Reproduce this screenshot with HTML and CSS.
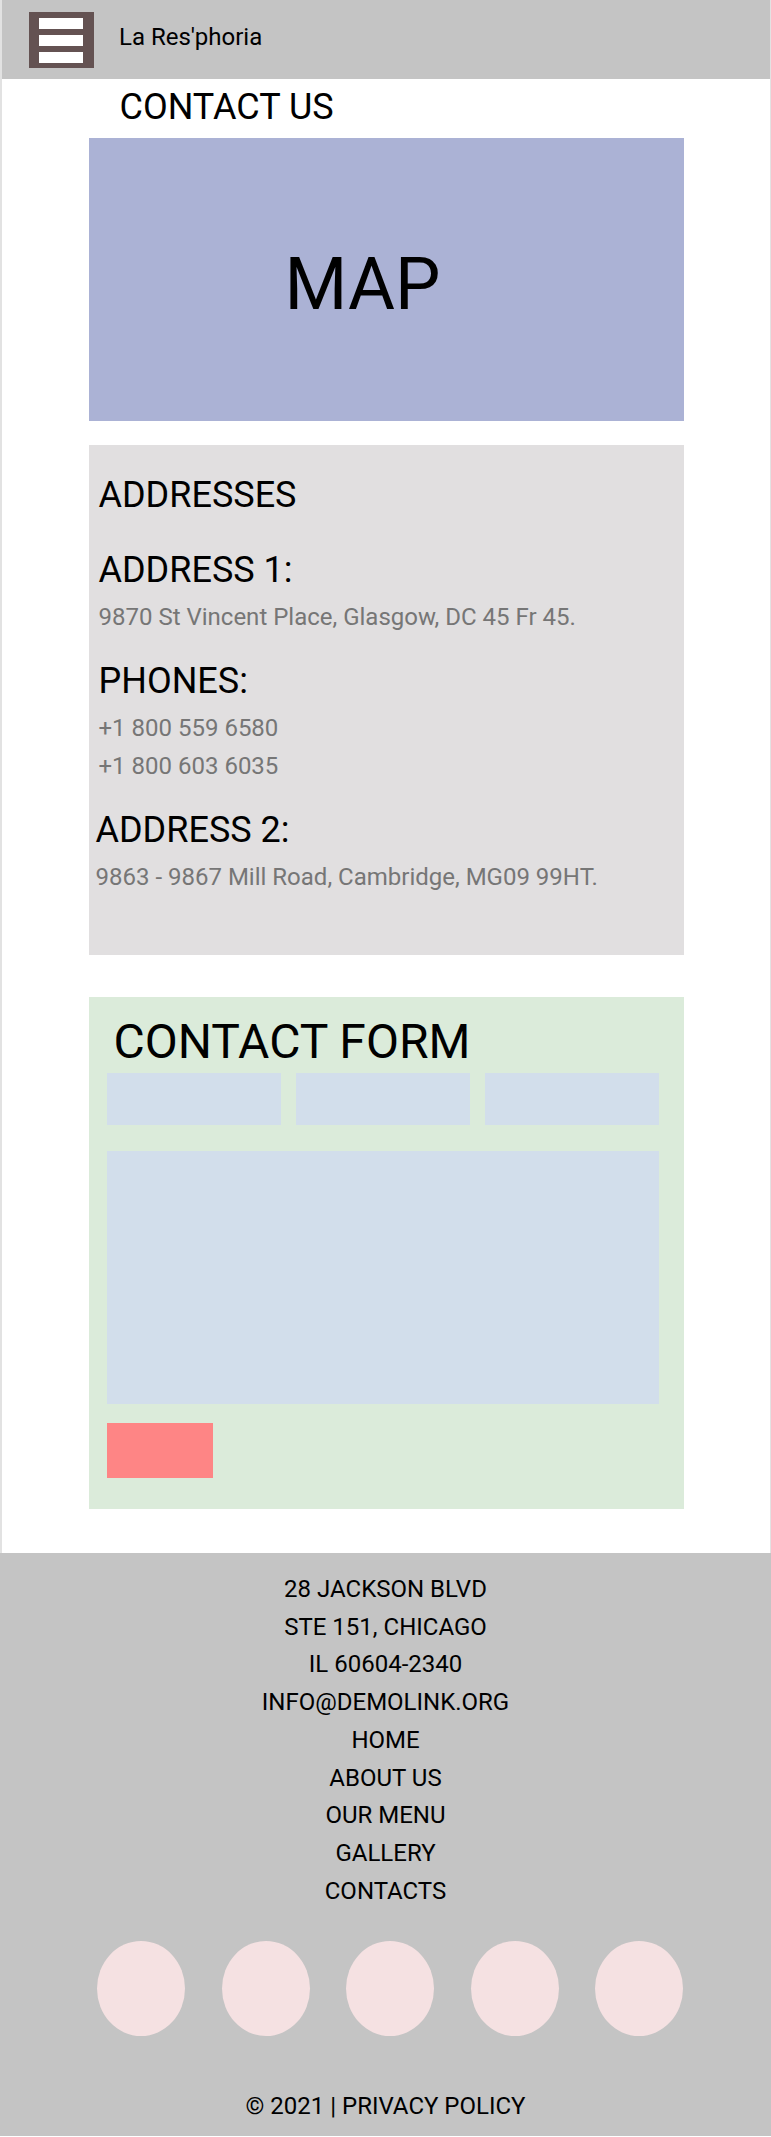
FILE: index.html
```html
<!DOCTYPE html>
<html lang="en">
<head>
<meta charset="utf-8">
<title>Contact Us — La Res'phoria</title>
<link rel="stylesheet" href="styles.css">
</head>
<body>
<div class="page">
  <header class="topbar">
    <button class="burger" type="button" aria-label="Menu"><span></span><span></span><span></span></button>
    <span class="brand">La Res'phoria</span>
  </header>
  <main class="content">
    <h1 class="page-title">CONTACT US</h1>
    <div class="map"><span class="map-label">MAP</span></div>
    <section class="info">
      <h2 class="info-heading">ADDRESSES</h2>
      <div class="info-block">
        <h3 class="info-title">ADDRESS 1:</h3>
        <p class="info-text">9870 St Vincent Place, Glasgow, DC 45 Fr 45.</p>
      </div>
      <div class="info-block">
        <h3 class="info-title">PHONES:</h3>
        <p class="info-text">+1 800 559 6580</p>
        <p class="info-text">+1 800 603 6035</p>
      </div>
      <div class="info-block info-block-shift">
        <h3 class="info-title">ADDRESS 2:</h3>
        <p class="info-text">9863 - 9867 Mill Road, Cambridge, MG09 99HT.</p>
      </div>
    </section>
    <section class="form-card">
      <h2 class="form-title">CONTACT FORM</h2>
      <div class="fields">
        <div class="field"></div>
        <div class="field"></div>
        <div class="field"></div>
      </div>
      <div class="message"></div>
      <div class="submit"></div>
    </section>
  </main>
</div>
<footer class="footer">
  <div class="footer-lines">
    <p class="footer-line">28 JACKSON BLVD</p>
    <p class="footer-line">STE 151, CHICAGO</p>
    <p class="footer-line">IL 60604-2340</p>
    <p class="footer-line">INFO@DEMOLINK.ORG</p>
    <a class="footer-line" href="#">HOME</a>
    <a class="footer-line" href="#">ABOUT US</a>
    <a class="footer-line" href="#">OUR MENU</a>
    <a class="footer-line" href="#">GALLERY</a>
    <a class="footer-line" href="#">CONTACTS</a>
  </div>
  <div class="socials">
    <span class="social"></span>
    <span class="social"></span>
    <span class="social"></span>
    <span class="social"></span>
    <span class="social"></span>
  </div>
  <p class="copyright">© 2021 | PRIVACY POLICY</p>
</footer>
</body>
</html>
```

FILE: styles.css
```css
* { box-sizing: border-box; }

html, body {
  margin: 0;
  padding: 0;
  background: #ffffff;
}

body {
  font-family: Roboto, "Liberation Sans", Arial, sans-serif;
  color: #000000;
}

.page {
  border-left: 2px solid #e2e2e2;
  border-right: 1px solid #e2e2e2;
}

/* Header */
.topbar {
  height: 79px;
  background: #c4c4c4;
  display: flex;
  align-items: center;
  padding-left: 27px;
}

.burger {
  width: 65px;
  height: 56px;
  background: #645252;
  border: 0;
  margin: 0;
  padding: 6px 11px 5px 10px;
  display: flex;
  flex-direction: column;
  gap: 6px;
  cursor: pointer;
}

.burger span {
  display: block;
  height: 11px;
  width: 44px;
  background: #ffffff;
}

.brand {
  margin-left: 25px;
  font-size: 24px;
  line-height: 28px;
  margin-bottom: 5px;
}

/* Content */
.content {
  width: 595px;
  margin: 0 auto;
  padding: 7px 0 44px;
}

.page-title {
  margin: 0 0 10px 31px;
  font-size: 36px;
  line-height: 42px;
  font-weight: 400;
}

.map {
  height: 283px;
  background: #abb2d5;
  display: flex;
  align-items: center;
  padding: 11px 0 0 196px;
}

.map-label {
  font-size: 72px;
  line-height: 84px;
}

.info {
  margin-top: 24px;
  background: #e1dfe0;
  padding: 29px 10px 64px;
}

.info-heading {
  margin: 0 0 33px;
  font-size: 36px;
  line-height: 42px;
  font-weight: 400;
}

.info-block + .info-block {
  margin-top: 29px;
}

.info-block-shift {
  margin-left: -3px;
}

.info-title {
  margin: 0 0 12px;
  font-size: 36px;
  line-height: 42px;
  font-weight: 400;
}

.info-text {
  margin: 0;
  font-size: 24px;
  line-height: 28px;
  color: #767676;
}

.info-text + .info-text {
  margin-top: 10px;
}

/* Form */
.form-card {
  margin-top: 42px;
  background: #dbebda;
  padding: 17px 25px 31px 18px;
}

.form-title {
  margin: 0 0 3px 7px;
  font-size: 48px;
  line-height: 56px;
  font-weight: 400;
}

.fields {
  display: grid;
  grid-template-columns: repeat(3, 1fr);
  gap: 15px;
}

.field {
  height: 52px;
  background: #d2deeb;
}

.message {
  margin-top: 26px;
  height: 253px;
  background: #d2deeb;
}

.submit {
  margin-top: 19px;
  width: 106px;
  height: 55px;
  background: #fe8585;
}

/* Footer */
.footer {
  background: #c4c4c4;
  padding: 18px 0 10px;
  text-align: center;
}

.footer-lines {
  display: flex;
  flex-direction: column;
  align-items: center;
}

.footer-line {
  margin: 0;
  display: block;
  font-size: 24px;
  line-height: 37.7px;
  color: #000000;
  text-decoration: none;
}

.socials {
  margin-top: 31px;
  display: flex;
  justify-content: center;
  gap: 36.5px;
  padding-left: 9px;
}

.social {
  width: 88px;
  height: 95px;
  border-radius: 50%;
  background: #f5e1e2;
}

.copyright {
  margin: 52px 0 0;
  font-size: 24px;
  line-height: 37.7px;
}
```
